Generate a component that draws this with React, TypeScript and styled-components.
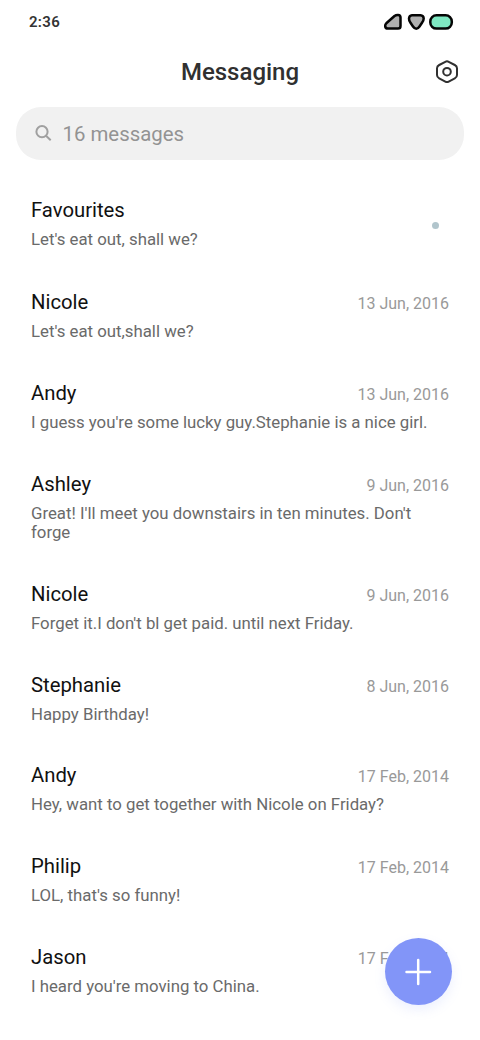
import React from 'react';
import styled, { createGlobalStyle } from 'styled-components';

const Global = createGlobalStyle`
  * { box-sizing: border-box; }
  body { margin: 0; background: #fff; font-family: Roboto, sans-serif; }
`;

const Screen = styled.main`
  width: 480px;
  height: 1040px;
  position: relative;
  overflow: hidden;
  display: flex;
  flex-direction: column;
  background: #fff;
`;

const StatusBar = styled.div`
  height: 44px;
  padding: 0 26px 0 29px;
  display: flex;
  align-items: center;
  justify-content: space-between;
`;

const Clock = styled.span`
  font-size: 15px;
  font-weight: 600;
  letter-spacing: 0.3px;
  color: #333;
`;

const Header = styled.header`
  height: 56px;
  padding: 0 20px;
  display: grid;
  grid-template-columns: 26px 1fr 26px;
  align-items: center;
`;

const Title = styled.h1`
  grid-column: 2;
  margin: 0;
  text-align: center;
  font-size: 24px;
  line-height: 28px;
  font-weight: 500;
  color: #303030;
`;

const SettingsButton = styled.button`
  border: 0;
  padding: 0;
  background: none;
  height: 26px;
`;

const Search = styled.div`
  margin: 7px 16px 0;
  height: 53px;
  padding: 0 18px;
  display: flex;
  align-items: center;
  gap: 9.5px;
  border-radius: 25px;
  background: #f1f1f1;
  font-size: 20.4px;
  color: #939393;
`;

const List = styled.div`
  margin-top: 37.4px;
  padding: 0 31px;
`;

const Row = styled.article<{ $height: number }>`
  height: ${(p) => p.$height}px;
`;

const RowTop = styled.div`
  display: flex;
  justify-content: space-between;
  align-items: baseline;
  height: 32.8px;
`;

const Name = styled.h2`
  margin: 0;
  font-size: 20.3px;
  line-height: 26px;
  font-weight: 400;
  color: #111;
`;

const DateText = styled.time`
  font-size: 16px;
  color: #999;
`;

const Dot = styled.span`
  width: 7px;
  height: 7px;
  margin: 24.6px 10px 0 0;
  align-self: flex-start;
  border-radius: 50%;
  background: #b1c5cc;
`;

const Preview = styled.p`
  margin: 0;
  width: 405px;
  font-size: 16.8px;
  line-height: 19.6px;
  color: #6a6a6a;
`;

const Compose = styled.button`
  position: absolute;
  left: 385px;
  top: 938px;
  width: 67px;
  height: 67px;
  border: 0;
  padding: 0;
  border-radius: 50%;
  background: #8295f8;
  box-shadow: 0 5px 12px rgba(128, 149, 249, 0.14);
`;

const messages = [
  { name: 'Favourites', text: "Let's eat out, shall we?", date: '', height: 92 },
  { name: 'Nicole', text: "Let's eat out,shall we?", date: '13 Jun, 2016', height: 90.8 },
  { name: 'Andy', text: "I guess you're some lucky guy.Stephanie is a nice girl.", date: '13 Jun, 2016', height: 90.7 },
  { name: 'Ashley', text: "Great! I'll meet you downstairs in ten minutes. Don't forge", date: '9 Jun, 2016', height: 110.3 },
  { name: 'Nicole', text: "Forget it.I don't bl get paid. until next Friday.", date: '9 Jun, 2016', height: 90.7 },
  { name: 'Stephanie', text: 'Happy Birthday!', date: '8 Jun, 2016', height: 90.5 },
  { name: 'Andy', text: 'Hey, want to get together with Nicole on Friday?', date: '17 Feb, 2014', height: 90.9 },
  { name: 'Philip', text: "LOL, that's so funny!", date: '17 Feb, 2014', height: 90.7 },
  { name: 'Jason', text: "I heard you're moving to China.", date: '17 Feb, 2014', height: 80 },
];

export default function App() {
  return (
    <Screen>
      <Global />
      <StatusBar>
        <Clock>2:36</Clock>
        <svg width="70" height="18" viewBox="0 0 70 18" fill="#b0b0b0" stroke="#050505" strokeWidth="2.500" strokeLinejoin="round">
          <path d="M2.300 10.300L10.500 3Q12 1.900 14 2Q16.500 2.200 16.500 4.500V13Q16.500 15.600 14 15.600H4Q1.500 15.600 1.200 13.500Q1 11.500 2.300 10.300Z" />
          <path d="M28 2.200H36.500Q39.500 2.400 39.700 5.500Q39.700 7.500 38 9.800L35.500 13.500Q34 15.700 32.300 15.700Q30.500 15.700 29 13.500L26.500 9.800Q24.900 7.500 25 5.500Q25.200 2.400 28 2.200Z" />
          <rect x="46.300" y="2.200" width="21.500" height="13.400" rx="6.200" fill="#7fe8c2" />
        </svg>
      </StatusBar>
      <Header>
        <Title>Messaging</Title>
        <SettingsButton aria-label="Settings">
          <svg width="26" height="26" viewBox="0 0 26 26" fill="none" stroke="#303030" strokeWidth="2">
            <path d="M11.300 2.800Q13 1.900 14.700 2.800L20.800 6Q23 7.200 23 9.300V16Q23 18.200 20.800 19.400L14.700 22.600Q13 23.500 11.300 22.600L5.200 19.400Q3 18.200 3 16V9.300Q3 7.200 5.200 6Z" />
            <circle cx="13" cy="12.700" r="3.800" />
          </svg>
        </SettingsButton>
      </Header>
      <Search>
        <svg width="19" height="19" viewBox="0 0 19 19" fill="none" stroke="#a0a0a0" strokeWidth="2">
          <circle cx="8" cy="7.700" r="5.600" />
          <path d="M12 11.700L16.700 16.200" />
        </svg>
        <span>16 messages</span>
      </Search>
      <List>
        {messages.map((m, i) => (
          <Row key={i} $height={m.height}>
            <RowTop>
              <Name>{m.name}</Name>
              {m.date ? <DateText>{m.date}</DateText> : <Dot />}
            </RowTop>
            <Preview>{m.text}</Preview>
          </Row>
        ))}
      </List>
      <Compose aria-label="New message">
        <svg width="67" height="67" viewBox="0 0 67 67" stroke="#fff" strokeWidth="2.500" strokeLinecap="round">
          <path d="M21.500 34H45M33.200 22V46" />
        </svg>
      </Compose>
    </Screen>
  );
}
